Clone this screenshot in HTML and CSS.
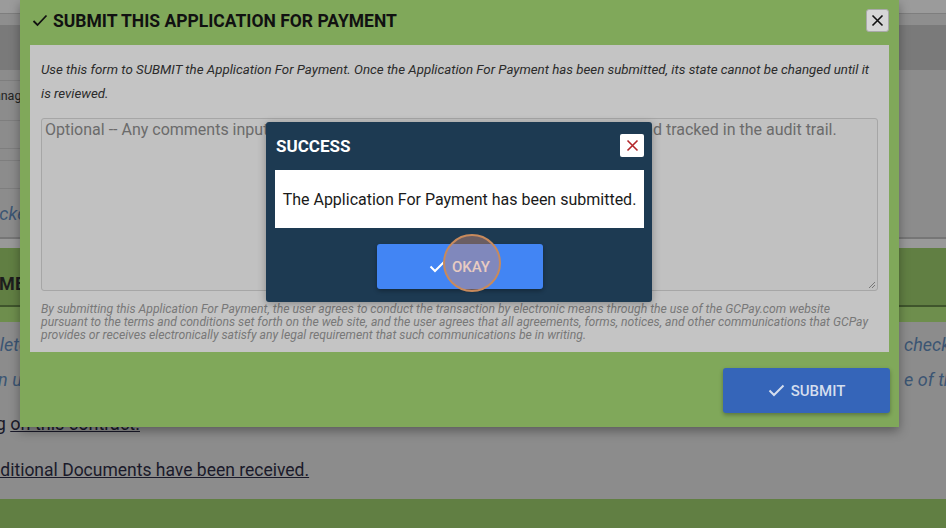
FILE: index.html
```html
<!DOCTYPE html>
<html lang="en">
<head>
  <meta charset="UTF-8" />
  <title>Submit Application For Payment</title>
  <link rel="stylesheet" href="styles.css">
</head>
<body>

  <!-- page behind the modal (already dimmed) -->
  <div class="page">
    <div class="top-strip"></div>
    <div class="sub-strip"></div>
    <div class="dark-band"></div>
    <div class="content-area">
      <div class="side-col">
        <div class="side-row r1"></div>
        <div class="side-row r2"><span class="side-label">Manage</span></div>
        <div class="side-row r3"></div>
        <div class="side-row r4"></div>
        <div class="side-row r5"></div>
        <div class="side-row r6"><span class="side-note">Locked</span></div>
      </div>
    </div>
    <div class="light-strip"></div>
    <div class="green-band"><span class="band-title">HOME</span></div>
    <div class="green-strip"></div>
    <div class="notes">
      <p class="note-line n1"><span class="cut-left">Delete</span><span>check</span></p>
      <p class="note-line n2"><span class="cut-left">Open up</span><span>e of the</span></p>
      <p class="link-line l1"><span class="cut-left">Billing</span> <a href="#">on this contract.</a></p>
      <p class="link-line l2"><a href="#" class="cut-left">Additional Documents have been received.</a></p>
    </div>
    <div class="footer-band"></div>
  </div>

  <!-- submit modal -->
  <div class="modal">
    <div class="modal-header">
      <svg class="title-check" width="16" height="13" viewBox="0 0 16 13">
        <polyline points="1.5,7 5.5,11 14.5,1.5" fill="none" stroke="#111" stroke-width="1.8"/>
      </svg>
      <h2 class="modal-title">SUBMIT THIS APPLICATION FOR PAYMENT</h2>
      <button class="modal-close">
        <svg width="13" height="13" viewBox="0 0 13 13">
          <path d="M1.5 1.5 L11.5 11.5 M11.5 1.5 L1.5 11.5" stroke="#111" stroke-width="1.6"/>
        </svg>
      </button>
    </div>
    <div class="modal-body">
      <p class="intro">Use this form to SUBMIT the Application For Payment. Once the Application For Payment has been submitted, its state cannot be changed until it is reviewed.</p>
      <div class="comments">
        <span class="placeholder">Optional -- Any comments input during this step will be stored with the submission  and tracked in the audit trail.</span>
        <svg class="grip" width="9" height="9" viewBox="0 0 9 9">
          <path d="M8 2 L2 8 M8 5 L5 8" stroke="#777" stroke-width="1"/>
        </svg>
      </div>
      <p class="disclaimer">By submitting this Application For Payment, the user agrees to conduct the transaction by electronic means through the use of the GCPay.com website<br>pursuant to the terms and conditions set forth on the web site, and the user agrees that all agreements, forms, notices, and other communications that GCPay<br>provides or receives electronically satisfy any legal requirement that such communications be in writing.</p>
    </div>
    <div class="modal-footer">
      <button class="btn btn-submit">
        <svg width="17" height="13" viewBox="0 0 17 13">
          <polyline points="1.5,6.5 6,11 15.5,1.5" fill="none" stroke="currentColor" stroke-width="2"/>
        </svg>
        SUBMIT
      </button>
    </div>
  </div>

  <!-- success dialog -->
  <div class="dialog">
    <div class="dialog-header">
      <h3 class="dialog-title">SUCCESS</h3>
      <button class="dialog-close">
        <svg width="13" height="13" viewBox="0 0 13 13">
          <path d="M1.5 1.5 L11.5 11.5 M11.5 1.5 L1.5 11.5" stroke="#b3262a" stroke-width="1.6"/>
        </svg>
      </button>
    </div>
    <div class="dialog-message">The Application For Payment has been submitted.</div>
    <div class="dialog-actions">
      <button class="btn btn-okay">
        <svg width="17" height="13" viewBox="0 0 17 13">
          <polyline points="1.5,6.5 6,11 15.5,1.5" fill="none" stroke="currentColor" stroke-width="2"/>
        </svg>
        OKAY
      </button>
    </div>
  </div>

  <!-- click marker -->
  <div class="click-ring"></div>

</body>
</html>
```

FILE: styles.css
```css
* {
  margin: 0;
  padding: 0;
  box-sizing: border-box;
}

body {
  width: 946px;
  height: 528px;
  overflow: hidden;
  background: #8c8c8c;
  font-family: Roboto, 'Liberation Sans', sans-serif;
  position: relative;
}

/* === Page behind === */
.top-strip {
  height: 14px;
  background: #9b9b9b;
  border-bottom: 1px solid #7e7e7e;
}

.sub-strip {
  height: 11px;
  background: #8e8e8e;
}

.dark-band {
  height: 45px;
  background: #7a7a7a;
}

.content-area {
  height: 169px;
  background: #8c8c8c;
  border-bottom: 2px solid #767676;
}

.side-col {
  width: 260px;
}

.side-row {
  border-bottom: 1px solid #7e7e7e;
  display: flex;
  align-items: center;
  overflow: hidden;
}

.r1 { height: 11px; }
.r2 { height: 40px; align-items: flex-start; padding-top: 6px; }
.r3 { height: 28px; }
.r4 { height: 12px; }
.r5 { height: 28px; }
.r6 { height: 49px; border-bottom: none; }

.side-label {
  font-size: 12.5px;
  line-height: 18px;
  color: #222;
  margin-left: -17px;
}

.side-note {
  font-size: 18px;
  font-style: italic;
  color: #3b5573;
  margin-left: -20px;
}

.light-strip {
  height: 9px;
  background: #999;
}

.green-band {
  height: 59px;
  background: #617f43;
  border-bottom: 2px solid #3f552c;
  padding-top: 25px;
  overflow: hidden;
}

.band-title {
  display: block;
  font-size: 18px;
  font-weight: bold;
  color: #1d1d1d;
  margin-left: -26px;
}

.green-strip {
  height: 15px;
  background: #6e8e4d;
}

.notes {
  height: 177px;
  padding-top: 12px;
  overflow: hidden;
}

.note-line {
  display: flex;
  justify-content: space-between;
  font-size: 18px;
  line-height: 22px;
  font-style: italic;
  color: #3b5573;
}

.note-line span:last-child {
  width: 42px;
  white-space: nowrap;
}

.n2 {
  margin-top: 13px;
}

.cut-left {
  margin-left: -21px;
}

.n2 .cut-left {
  margin-left: -33px;
}

.link-line {
  font-size: 18px;
  line-height: 22px;
  color: #1a1a2a;
}

.link-line a {
  color: #1a1a2a;
}

.l1 {
  margin-top: 22px;
}

.l1 .cut-left {
  margin-left: -43px;
}

.l2 {
  margin-top: 24px;
  font-size: 17.5px;
}

.l2 .cut-left {
  margin-left: -21px;
}

.footer-band {
  height: 40px;
  background: #617f43;
}

/* === Submit modal === */
.modal {
  position: absolute;
  left: 20px;
  top: 0;
  width: 879px;
  background: #80a85a;
  box-shadow: 0 4px 10px rgba(0, 0, 0, 0.35);
}

.modal-header {
  height: 41px;
  margin-bottom: 4px;
  display: flex;
  align-items: center;
  padding: 0 10px 0 12px;
}

.title-check {
  margin-right: 5px;
}

.modal-title {
  font-size: 17.5px;
  font-weight: bold;
  color: #111;
  flex: 1;
}

.modal-close {
  width: 23px;
  height: 23px;
  background: #d6d6d6;
  border: 1px solid #a9a9a9;
  border-radius: 3px;
  display: flex;
  align-items: center;
  justify-content: center;
}

.modal-body {
  margin: 0 10px;
  background: #c4c4c4;
  padding: 13px 11px 10px;
}

.intro {
  font-size: 13.3px;
  line-height: 24px;
  font-style: italic;
  color: #2b2b2b;
}

.comments {
  position: relative;
  margin-top: 12px;
  height: 173px;
  background: #c1c1c1;
  border: 1px solid #a6a6a6;
  border-radius: 3px;
  padding: 1px 3px;
}

.placeholder {
  font-size: 16px;
  line-height: 20px;
  color: #6b6b6b;
  white-space: pre;
}

.grip {
  position: absolute;
  right: 1px;
  bottom: 1px;
}

.disclaimer {
  margin-top: 12px;
  font-size: 12.2px;
  line-height: 13px;
  font-style: italic;
  color: #787878;
  white-space: nowrap;
}

.modal-footer {
  height: 75px;
  display: flex;
  justify-content: flex-end;
  padding: 16px 9px 0 0;
}

.btn {
  border: none;
  border-radius: 3px;
  display: flex;
  align-items: center;
  justify-content: center;
  gap: 6px;
  font-family: Roboto, 'Liberation Sans', sans-serif;
  font-size: 15px;
  font-weight: 500;
  box-shadow: 0 2px 4px rgba(0, 0, 0, 0.3);
}

.btn-submit {
  width: 167px;
  height: 45px;
  background: #3565b9;
  color: #d4deee;
}

/* === Success dialog === */
.dialog {
  position: absolute;
  left: 266px;
  top: 122px;
  width: 386px;
  height: 180px;
  background: #1d3a52;
  border-radius: 3px;
  padding: 12px 8px 0 9px;
  box-shadow: 0 2px 8px rgba(0, 0, 0, 0.3);
}

.dialog-header {
  height: 23px;
  display: flex;
  align-items: center;
  justify-content: space-between;
  padding-left: 1px;
}

.dialog-title {
  font-size: 17px;
  font-weight: bold;
  color: #fff;
}

.dialog-close {
  width: 24px;
  height: 23px;
  background: #fff;
  border: none;
  border-radius: 2px;
  display: flex;
  align-items: center;
  justify-content: center;
}

.dialog-message {
  margin-top: 13px;
  height: 58px;
  background: #fff;
  display: flex;
  align-items: center;
  justify-content: center;
  font-size: 16px;
  color: #1a1a1a;
}

.dialog-actions {
  display: flex;
  justify-content: center;
  padding-top: 16px;
}

.btn-okay {
  width: 166px;
  height: 45px;
  background: #4285f4;
  color: #fff;
}

/* click marker over the OKAY button */
.click-ring {
  position: absolute;
  left: 443px;
  top: 234px;
  width: 58px;
  height: 58px;
  border-radius: 50%;
  border: 2px solid #c88a5c;
  background: rgba(205, 140, 120, 0.45);
}
```
